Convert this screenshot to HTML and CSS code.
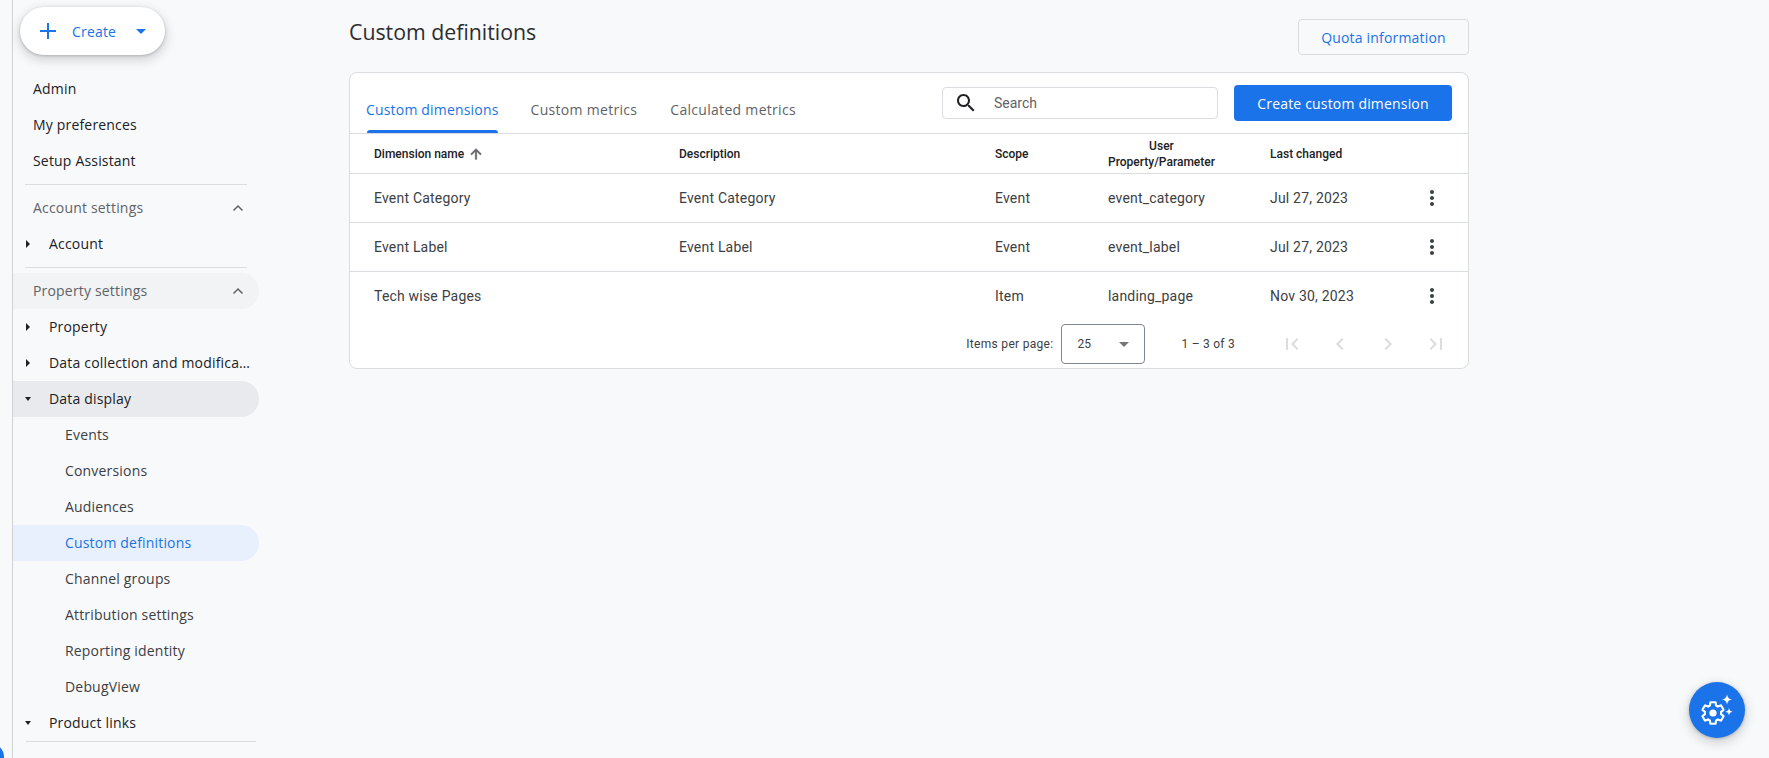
FILE: index.html
```html
<!DOCTYPE html>
<html lang="en">
<head>
<meta charset="utf-8">
<title>Custom definitions</title>
<link rel="stylesheet" href="styles.css">
</head>
<body>
<div class="rail"></div>
<nav class="sidebar">
  <button class="create">
    <svg class="plus" width="16" height="16" viewBox="0 0 16 16"><path d="M8 0v16M0 8h16" stroke="#1a73e8" stroke-width="2" fill="none"/></svg>
    <span class="create-label">Create</span>
    <span class="caret"></span>
  </button>
  <div class="items">
    <a class="item lv0">Admin</a>
    <a class="item lv0">My preferences</a>
    <a class="item lv0">Setup Assistant</a>
    <div class="divider"></div>
    <a class="item lv0 section">Account settings<svg class="chev" width="24" height="24" viewBox="0 0 24 24"><path d="M7.5 14.5 12 10l4.5 4.5" fill="none" stroke="#5f6368" stroke-width="1.5"/></svg></a>
    <a class="item lv1"><span class="tri-r"></span><span class="lbl">Account</span></a>
    <div class="divider"></div>
    <a class="item lv0 section hl-soft">Property settings<svg class="chev" width="24" height="24" viewBox="0 0 24 24"><path d="M7.5 14.5 12 10l4.5 4.5" fill="none" stroke="#5f6368" stroke-width="1.5"/></svg></a>
    <a class="item lv1"><span class="tri-r"></span><span class="lbl">Property</span></a>
    <a class="item lv1"><span class="tri-r"></span><span class="lbl">Data collection and modifica…</span></a>
    <a class="item lv1 hl-grey"><span class="tri-d"></span><span class="lbl">Data display</span></a>
    <a class="item lv2">Events</a>
    <a class="item lv2">Conversions</a>
    <a class="item lv2">Audiences</a>
    <a class="item lv2 active">Custom definitions</a>
    <a class="item lv2">Channel groups</a>
    <a class="item lv2">Attribution settings</a>
    <a class="item lv2">Reporting identity</a>
    <a class="item lv2">DebugView</a>
    <a class="item lv1"><span class="tri-d"></span><span class="lbl">Product links</span></a>
    <div class="divider wide"></div>
  </div>
</nav>
<main class="main">
  <header class="head">
    <h1 class="title">Custom definitions</h1>
    <button class="quota">Quota information</button>
  </header>
  <section class="card">
    <div class="toolbar">
      <div class="tabs">
        <a class="tab current">Custom dimensions</a>
        <a class="tab">Custom metrics</a>
        <a class="tab">Calculated metrics</a>
      </div>
      <div class="search">
        <svg width="24" height="24" viewBox="0 0 24 24"><path fill="#202124" d="M15.5 14h-.79l-.28-.27C15.41 12.59 16 11.11 16 9.5 16 5.91 13.09 3 9.5 3S3 5.91 3 9.5 5.91 16 9.5 16c1.61 0 3.09-.59 4.23-1.57l.27.28v.79l5 4.99L20.49 19l-4.99-5zm-6 0C7.01 14 5 11.99 5 9.5S7.01 5 9.5 5 14 7.01 14 9.5 11.99 14 9.5 14z"/></svg>
        <span class="search-text">Search</span>
      </div>
      <button class="primary">Create custom dimension</button>
    </div>
    <div class="row row-head">
      <div class="sorted">Dimension name<svg width="16" height="16" viewBox="0 0 24 24"><path fill="#5f6368" stroke="#5f6368" stroke-width="1" d="M4 12l1.41 1.41L11 7.83V20h2V7.83l5.58 5.59L20 12l-8-8-8 8z"/></svg></div>
      <div>Description</div>
      <div>Scope</div>
      <div class="two-line">User<br>Property/Parameter</div>
      <div>Last changed</div>
      <div></div>
    </div>
    <div class="row">
      <div>Event Category</div><div>Event Category</div><div>Event</div><div>event_category</div><div>Jul 27, 2023</div>
      <svg class="kebab" width="24" height="24" viewBox="0 0 24 24"><path fill="#3c4043" d="M12 8c1.1 0 2-.9 2-2s-.9-2-2-2-2 .9-2 2 .9 2 2 2zm0 2c-1.1 0-2 .9-2 2s.9 2 2 2 2-.9 2-2-.9-2-2-2zm0 6c-1.1 0-2 .9-2 2s.9 2 2 2 2-.9 2-2-.9-2-2-2z"/></svg>
    </div>
    <div class="row">
      <div>Event Label</div><div>Event Label</div><div>Event</div><div>event_label</div><div>Jul 27, 2023</div>
      <svg class="kebab" width="24" height="24" viewBox="0 0 24 24"><path fill="#3c4043" d="M12 8c1.1 0 2-.9 2-2s-.9-2-2-2-2 .9-2 2 .9 2 2 2zm0 2c-1.1 0-2 .9-2 2s.9 2 2 2 2-.9 2-2-.9-2-2-2zm0 6c-1.1 0-2 .9-2 2s.9 2 2 2 2-.9 2-2-.9-2-2-2z"/></svg>
    </div>
    <div class="row last">
      <div>Tech wise Pages</div><div></div><div>Item</div><div>landing_page</div><div>Nov 30, 2023</div>
      <svg class="kebab" width="24" height="24" viewBox="0 0 24 24"><path fill="#3c4043" d="M12 8c1.1 0 2-.9 2-2s-.9-2-2-2-2 .9-2 2 .9 2 2 2zm0 2c-1.1 0-2 .9-2 2s.9 2 2 2 2-.9 2-2-.9-2-2-2zm0 6c-1.1 0-2 .9-2 2s.9 2 2 2 2-.9 2-2-.9-2-2-2z"/></svg>
    </div>
    <div class="pager">
      <span class="per-page">Items per page:</span>
      <div class="select"><span>25</span><span class="select-caret"></span></div>
      <span class="range">1 – 3 of 3</span>
      <div class="pager-icons">
        <svg width="24" height="24" viewBox="0 0 24 24"><path d="M18.41 16.59L13.82 12l4.59-4.59L17 6l-6 6 6 6zM6 6h2v12H6z"/></svg>
        <svg width="24" height="24" viewBox="0 0 24 24"><path d="M15.41 7.41L14 6l-6 6 6 6 1.41-1.41L10.83 12z"/></svg>
        <svg width="24" height="24" viewBox="0 0 24 24"><path d="M10 6L8.59 7.41 13.17 12l-4.58 4.59L10 18l6-6z"/></svg>
        <svg width="24" height="24" viewBox="0 0 24 24"><path d="M5.59 7.41L10.18 12l-4.59 4.59L7 18l6-6-6-6zM16 6h2v12h-2z"/></svg>
      </div>
    </div>
  </section>
</main>
<div class="corner-dot"></div>
<button class="fab" aria-label="Assistant">
  <svg width="56" height="56" viewBox="0 0 56 56">
    <g transform="translate(10.5 17.5) scale(1.125)">
      <path fill="none" stroke="#fff" stroke-width="1.9" stroke-linejoin="round" d="M19.14 12.94c.04-.3.06-.61.06-.94 0-.32-.02-.64-.07-.94l2.03-1.58c.18-.14.23-.41.12-.61l-1.92-3.32c-.12-.22-.37-.29-.59-.22l-2.39.96c-.5-.38-1.03-.7-1.62-.94l-.36-2.54c-.04-.24-.24-.41-.48-.41h-3.84c-.24 0-.43.17-.47.41l-.36 2.54c-.59.24-1.13.57-1.62.94l-2.39-.96c-.22-.08-.47 0-.59.22L2.74 8.87c-.12.21-.08.47.12.61l2.03 1.58c-.05.3-.09.63-.09.94s.02.64.07.94l-2.03 1.58c-.18.14-.23.41-.12.61l1.92 3.32c.12.22.37.29.59.22l2.39-.96c.5.38 1.03.7 1.62.94l.36 2.54c.05.24.24.41.48.41h3.84c.24 0 .44-.17.47-.41l.36-2.54c.59-.24 1.13-.56 1.62-.94l2.39.96c.22.08.47 0 .59-.22l1.92-3.32c.12-.22.07-.47-.12-.61l-2.01-1.58z"/>
      <circle cx="12" cy="12" r="3.2" fill="#fff"/>
    </g>
    <path fill="#fff" d="M38 12.5c.6 3.2 1.8 4.4 5 5-3.2.6-4.4 1.8-5 5-.6-3.2-1.8-4.4-5-5 3.2-.6 4.4-1.8 5-5z"/>
    <path fill="#fff" d="M40 26c.4 2.4 1.3 3.3 3.7 3.7-2.4.4-3.3 1.3-3.7 3.7-.4-2.4-1.3-3.3-3.7-3.7 2.4-.4 3.3-1.3 3.7-3.7z"/>
  </svg>
</button>
</body>
</html>
```
FILE: styles.css
```css
* { box-sizing: border-box; }
html, body { margin: 0; height: 100%; }
body {
  display: flex;
  height: 758px;
  overflow: hidden;
  background: #f8f9fa;
  font-family: "Open Sans", "Liberation Sans", sans-serif;
  color: #202124;
  position: relative;
}
button { font-family: inherit; cursor: pointer; }

.rail { width: 13px; flex: none; border-right: 1px solid #d0d2d6; background: #f8f9fb; }
.sidebar { width: 246px; flex: none; padding-top: 7px; background: #f8f9fb; }

.create {
  display: flex;
  align-items: center;
  width: 145px;
  height: 48px;
  margin-left: 7px;
  padding: 0 0 0 20px;
  border: 0;
  border-radius: 24px;
  background: #fff;
  color: #1a73e8;
  font-size: 14px;
  letter-spacing: .18px;
  font-weight: 500;
  box-shadow: 0 1px 3px rgba(60,64,67,.3), 0 4px 8px 3px rgba(60,64,67,.15);
}
.create-label { margin-left: 16px; }
.caret { width: 0; height: 0; margin-left: 20px; border: 5px solid transparent; border-top-color: #1a73e8; border-bottom: 0; }

.items { margin-top: 16px; }
.item {
  display: flex;
  align-items: center;
  height: 36px;
  padding-bottom: 1px;
  font-size: 14px;
  letter-spacing: .18px;
  font-weight: 500;
  color: #202124;
  white-space: nowrap;
  border-radius: 0 18px 18px 0;
}
.lv0 { padding-left: 20px; }
.lv1 { padding-left: 12px; }
.lv2 { padding-left: 52px; color: #3c4043; }
.section { color: #5f6368; justify-content: space-between; padding-right: 9px; }
.tri-r { width: 0; height: 0; margin: 0 19px 0 1px; border: 4px solid transparent; border-left-color: #202124; border-right: 0; }
.tri-d { width: 0; height: 0; margin-right: 18px; border-style: solid; border-color: #202124 transparent transparent; border-width: 4px 3.5px 0; }
.hl-soft { background: #f1f3f4; }
.hl-grey { background: #e8eaed; }
.active { background: #e8f0fe; color: #1a73e8; }
.divider { height: 1px; margin: 5px 12px; width: 222px; background: #dadce0; }
.divider.wide { margin: 0 0 0 13px; width: 230px; }

.main { flex: 1; min-width: 0; padding-left: 90px; }
.head { display: flex; justify-content: space-between; align-items: flex-start; width: 1120px; height: 72px; }
.title { margin: 18px 0 0; font-size: 21.3px; font-weight: 400; line-height: 28px; color: #2d2e31; }
.quota {
  width: 171px;
  height: 36px;
  margin-top: 19px;
  padding: 0;
  border: 1px solid #dadce0;
  border-radius: 4px;
  background: transparent;
  color: #1a73e8;
  font-size: 14px;
  letter-spacing: .18px;
  font-weight: 500;
}

.card {
  width: 1120px;
  height: 297px;
  border: 1px solid #dadce0;
  border-radius: 8px;
  background: #fff;
}
.toolbar { display: flex; align-items: flex-start; height: 61px; border-bottom: 1px solid #dadce0; }
.tabs { display: flex; gap: 32px; padding-left: 16px; }
.tab { display: block; padding-top: 27px; font-size: 14px; letter-spacing: .3px; font-weight: 500; line-height: 20px; color: #5f6368; white-space: nowrap; }
.tab:nth-child(3) { margin-left: 1px; }
.tab.current { color: #1a73e8; letter-spacing: .18px; }
.tab.current::after { content: ""; display: block; height: 3px; margin: 10px 1px 0; background: #1a73e8; border-radius: 3px 3px 0 0; }

.search {
  display: flex;
  align-items: center;
  width: 276px;
  height: 32px;
  margin: 14px 0 0 auto;
  padding-left: 11px;
  border: 1px solid #dadce0;
  border-radius: 4px;
  font-family: Roboto, sans-serif;
  font-size: 14px;
  color: #5f6368;
}
.search-text { margin-left: 16px; }
.primary {
  width: 218px;
  height: 36px;
  margin: 12px 16px 0 16px;
  padding: 0;
  border: 0;
  border-radius: 4px;
  background: #1a73e8;
  color: #fff;
  font-size: 14px;
  letter-spacing: .18px;
  font-weight: 500;
}

.row {
  display: grid;
  grid-template-columns: 305px 316px 113px 162px 150px 24px;
  align-items: center;
  height: 49px;
  padding-left: 24px;
  border-bottom: 1px solid #dadce0;
  font-family: Roboto, sans-serif;
  font-size: 14px;
  letter-spacing: .2px;
  color: #3c4043;
}
.row.last { height: 48px; border-bottom: 0; }
.row-head { height: 40px; font-size: 12px; font-weight: 500; color: #202124; line-height: 16px; letter-spacing: 0; }
.sorted { display: flex; align-items: center; gap: 4px; }
.two-line { justify-self: start; text-align: center; }

.pager {
  display: flex;
  align-items: flex-start;
  justify-content: flex-end;
  height: 47px;
  padding: 4px 8px 0 0;
  font-family: Roboto, sans-serif;
  font-size: 12px;
  letter-spacing: .3px;
  color: #3c4043;
}
.per-page { margin-top: 13px; }
.select {
  display: flex;
  align-items: center;
  justify-content: space-between;
  width: 84px;
  height: 40px;
  margin-left: 8px;
  padding: 0 15px;
  border: 1px solid #80868b;
  border-radius: 4px;
  letter-spacing: 0;
}
.select-caret { width: 0; height: 0; border: 5px solid transparent; border-top-color: #757575; border-bottom: 0; }
.range { margin: 13px 33px 0 36px; letter-spacing: .25px; }
.pager-icons { display: flex; gap: 24px; padding: 8px 12px 0; fill: #dcdcdc; }

.corner-dot { position: absolute; left: -24px; bottom: -13px; width: 28px; height: 28px; border-radius: 50%; background: #1a73e8; }
.fab {
  position: absolute;
  right: 24px;
  bottom: 20px;
  width: 56px;
  height: 56px;
  padding: 0;
  border: 0;
  border-radius: 50%;
  background: #1a73e8;
  box-shadow: 0 1px 3px rgba(60,64,67,.3), 0 4px 8px 3px rgba(60,64,67,.15);
}
.fab svg { display: block; }
```
